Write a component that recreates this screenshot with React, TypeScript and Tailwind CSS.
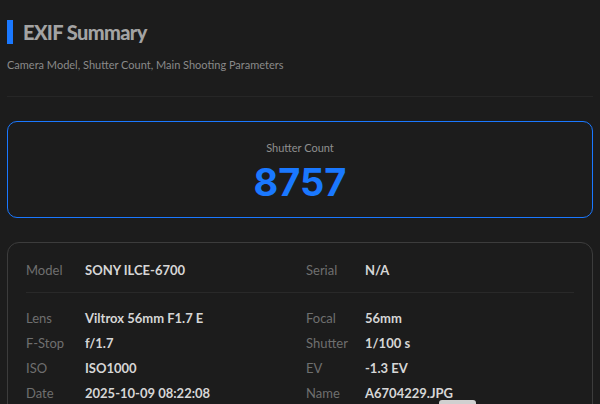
import React from "react";

const rows: [string, string, string, string][] = [
  ["Lens", "Viltrox 56mm F1.7 E", "Focal", "56mm"],
  ["F-Stop", "f/1.7", "Shutter", "1/100 s"],
  ["ISO", "ISO1000", "EV", "-1.3 EV"],
  ["Date", "2025-10-09 08:22:08", "Name", "A6704229.JPG"],
];

function Item({ label, value }: { label: string; value: string }) {
  return (
    <div className="flex items-center h-[20px]">
      <span className="w-[59px] shrink-0 text-[13px] text-[#6f6f6f]">{label}</span>
      <span className="text-[13px] font-bold text-[#d6d6d6] whitespace-nowrap">{value}</span>
    </div>
  );
}

export default function App() {
  return (
    <div
      className="relative h-[404px] overflow-hidden bg-[#1c1c1c] px-[7px] pt-[20px]"
      style={{ fontFamily: "Lato, 'Noto Sans', sans-serif" }}
    >
      <div className="flex items-center gap-[10px]">
        <div className="w-[6px] h-[24px] bg-[#1a78ff]" />
        <h1 className="text-[20px] font-black text-[#a3a3a3] leading-[24px] tracking-[-0.6px]">EXIF Summary</h1>
      </div>
      <p className="mt-[13px] text-[11px] text-[#8a8a8a] leading-[16px]">
        Camera Model, Shutter Count, Main Shooting Parameters
      </p>
      <div className="mt-[23px] border-b border-[#262626]" />

      <div className="mt-[24px] h-[97px] pt-[5px] rounded-[10px] border border-[#1a78ff] flex flex-col items-center justify-center">
        <div className="text-[11px] text-[#8f8f8f] leading-[14px]">Shutter Count</div>
        <div
          className="mt-[6px] text-[38px] font-bold text-[#1a78ff] leading-[42px]"
          style={{ fontFamily: "Inter, sans-serif" }}
        >
          8757
        </div>
      </div>

      <div className="mt-[24px] rounded-[12px] border border-[#3c3c3c] px-[18px] pt-[18px] pb-[20px]">
        <div className="grid grid-cols-2 gap-x-[12px]">
          <Item label="Model" value="SONY ILCE-6700" />
          <Item label="Serial" value="N/A" />
        </div>
        <div className="mt-[11px] mb-[16px] border-b border-[#292929]" />
        <div className="grid grid-cols-2 gap-x-[12px] gap-y-[5px]">
          {rows.map((r) => (
            <React.Fragment key={r[0]}>
              <Item label={r[0]} value={r[1]} />
              <Item label={r[2]} value={r[3]} />
            </React.Fragment>
          ))}
        </div>
      </div>

      <div className="absolute left-[439px] top-[400px] w-[37px] h-[10px] rounded-[3px] bg-[#d0d0d0]" />
    </div>
  );
}
